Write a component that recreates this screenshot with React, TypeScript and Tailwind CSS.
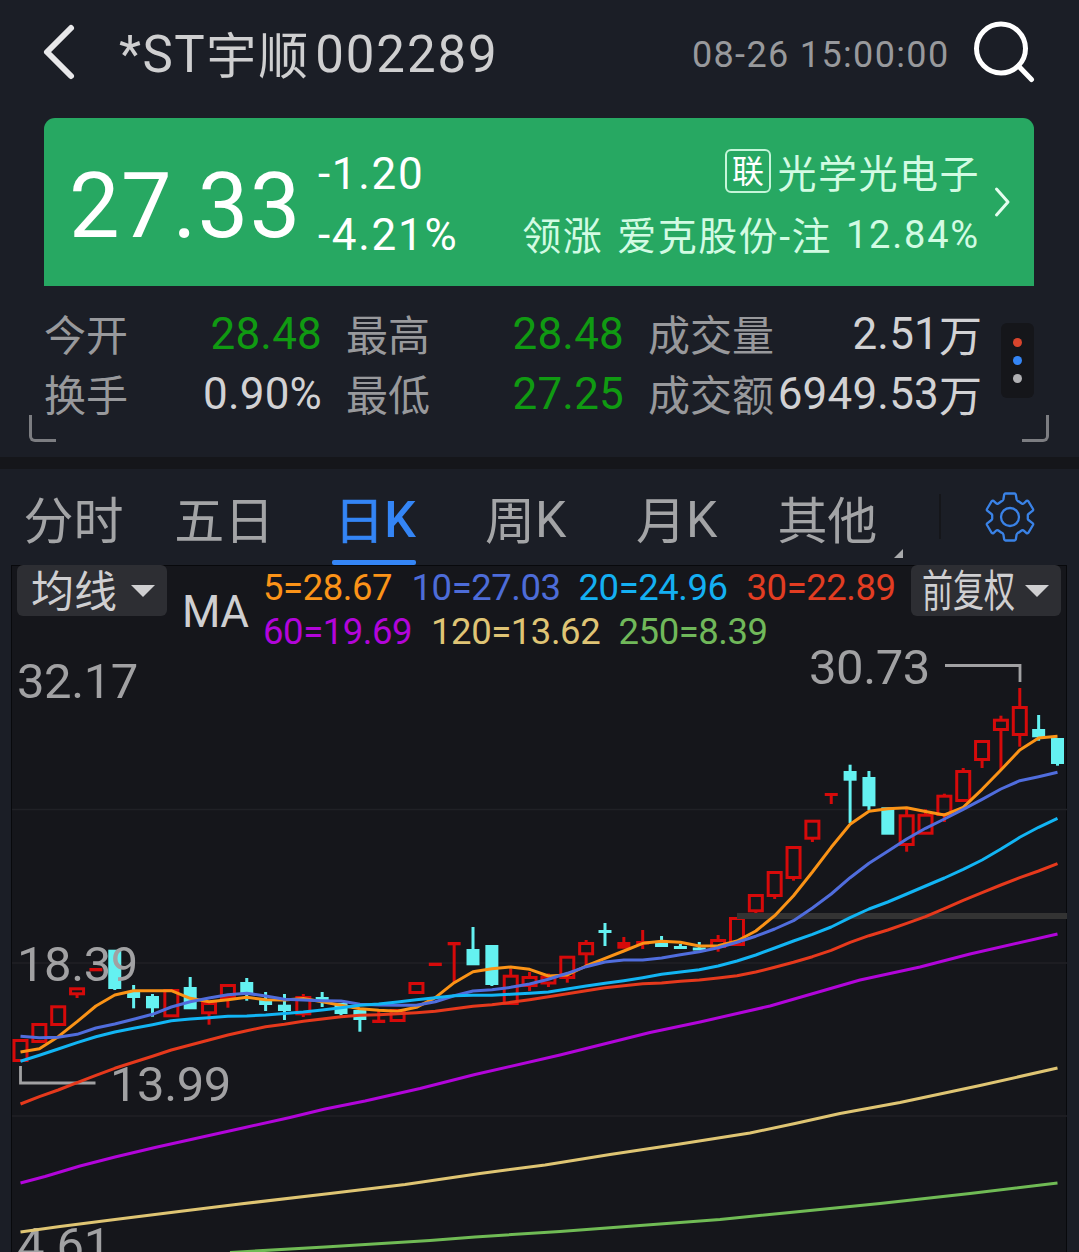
import React from "react";

type Candle = { c: "r" | "c" | "f"; o: number; b: number; h?: number; l?: number };

const STEP = 1037 / 55;
const cx = (i: number) => 20.5 + STEP * i;

/* c: colour / style, o–b: body top and bottom, h–l: wick top and bottom */
const candles: Candle[] = [
  { c: "r", o: 1039, b: 1062 },
  { c: "r", o: 1023, b: 1043 },
  { c: "r", o: 1005.3, b: 1026 },
  { c: "r", o: 987.3, b: 995.3, l: 998 },
  { c: "f", o: 968, b: 971.3 },
  { c: "c", o: 949.7, b: 989, l: 990 },
  { c: "c", o: 991, b: 998, h: 985, l: 1008.3 },
  { c: "c", o: 996, b: 1008.3, h: 994, l: 1016.7 },
  { c: "r", o: 989, b: 1017.3 },
  { c: "c", o: 987, b: 1009.3, h: 977 },
  { c: "r", o: 1002, b: 1014.3, l: 1024.7 },
  { c: "r", o: 984, b: 999, l: 1007.7 },
  { c: "c", o: 982, b: 994, h: 978, l: 1000.7 },
  { c: "c", o: 999.7, b: 1005, h: 992, l: 1011 },
  { c: "c", o: 1004.7, b: 1011, h: 994, l: 1020 },
  { c: "r", o: 996, b: 1015.3, h: 994, l: 1017 },
  { c: "c", o: 997, b: 1000, h: 992, l: 1007 },
  { c: "c", o: 1003, b: 1014, l: 1015.3 },
  { c: "c", o: 1010, b: 1020, l: 1031.7 },
  { c: "f", o: 1019.7, b: 1023, h: 1011 },
  { c: "r", o: 1009, b: 1022 },
  { c: "r", o: 982, b: 994 },
  { c: "f", o: 962.7, b: 966 },
  { c: "f", o: 942, b: 945.3, l: 982.3 },
  { c: "c", o: 949, b: 965.3, h: 927 },
  { c: "c", o: 945, b: 985, l: 986 },
  { c: "r", o: 974.7, b: 1005, h: 969 },
  { c: "r", o: 976, b: 987, h: 972, l: 991 },
  { c: "r", o: 975.5, b: 984.5, h: 973.5, l: 987 },
  { c: "r", o: 955.7, b: 979, l: 982.7 },
  { c: "r", o: 942, b: 955.3, h: 940, l: 965 },
  { c: "c", o: 930, b: 933, h: 923, l: 946 },
  { c: "f", o: 942, b: 948.7, h: 937 },
  { c: "f", o: 941, b: 944.5, h: 930, l: 949 },
  { c: "c", o: 943, b: 947, h: 936 },
  { c: "c", o: 946, b: 949, h: 944 },
  { c: "c", o: 947.5, b: 950.5, h: 942 },
  { c: "r", o: 939, b: 948, h: 935, l: 951.7 },
  { c: "r", o: 917, b: 946 },
  { c: "r", o: 894, b: 912.3, l: 913.5 },
  { c: "r", o: 871, b: 897, l: 899 },
  { c: "r", o: 846, b: 879, l: 880.7 },
  { c: "r", o: 819.7, b: 839.7, l: 842 },
  { c: "f", o: 793, b: 796, l: 804 },
  { c: "c", o: 771, b: 780.7, h: 764.7, l: 823 },
  { c: "c", o: 777, b: 806.3, h: 771, l: 810 },
  { c: "c", o: 807.3, b: 834.7 },
  { c: "r", o: 814.3, b: 846, h: 809, l: 851.7 },
  { c: "r", o: 813.7, b: 834.7, h: 809.3 },
  { c: "r", o: 794.7, b: 816, h: 793.7, l: 822 },
  { c: "r", o: 770, b: 802, h: 768 },
  { c: "r", o: 740, b: 761, l: 768 },
  { c: "r", o: 718.7, b: 731, h: 715.7, l: 770 },
  { c: "r", o: 706, b: 736, h: 688, l: 746.7 },
  { c: "c", o: 729, b: 737.3, h: 715, l: 740.7 },
  { c: "c", o: 738, b: 764, l: 765.7 },
];

const ma5 = [1052, 1048.7, 1036.7, 1021.7, 1006, 995, 990.7, 990.7, 990.7, 998.3, 1001.7, 999.7, 997.3, 999.7, 1000, 998.5, 1001.7, 1005.3, 1008.7, 1010.3, 1011.3, 1007.3, 997.7, 982.7, 971.7, 968.7, 967, 969.3, 976, 975, 966, 958.3, 951, 943.3, 941.3, 942.3, 946, 945.7, 941, 931, 915.7, 895.7, 872, 847.3, 824.3, 811.3, 808.7, 807.7, 811.5, 815, 807.3, 789.3, 770, 750, 738, 736.3];
const ma10 = [1036.3, 1037.7, 1037.3, 1034.3, 1028, 1024, 1019.3, 1014.3, 1007, 1001.7, 998, 994.7, 993.3, 996, 999.3, 1000, 1000.7, 1001, 1004.3, 1005, 1005.3, 1005.3, 1001.7, 995.7, 991, 989.7, 987.3, 984, 979.3, 973.3, 966.7, 962, 960, 960, 958, 954.7, 951.7, 947.7, 942.3, 936.2, 929, 920.7, 908, 894, 877.7, 863.3, 851.3, 839, 828.3, 819, 809.3, 799.3, 789, 780.7, 776.7, 772.3];
const ma20 = [1061.3, 1055.3, 1049, 1042.7, 1036.7, 1032, 1028.3, 1024.7, 1020.7, 1019, 1017.7, 1016.3, 1016, 1015, 1013.5, 1012, 1010, 1007.7, 1005.3, 1004, 1002, 999.7, 997.7, 995.7, 995.3, 995.3, 994.3, 993.3, 992, 989, 986, 983.3, 980.7, 977.7, 974.3, 972, 969.7, 966, 961, 955, 948, 941, 934.3, 927, 917.7, 909, 902, 894, 886, 878, 869.3, 860, 849, 837.3, 827.3, 818.3];
const ma30 = [1104, 1096.7, 1090, 1082.7, 1075.3, 1068.3, 1062.3, 1056.3, 1050, 1045, 1040, 1035, 1030.7, 1026.7, 1024.3, 1021.3, 1019, 1016.7, 1015.3, 1014.7, 1013.7, 1012.7, 1011.3, 1008.7, 1006.3, 1004.7, 1002.3, 999.7, 996.7, 993.7, 990.7, 987.7, 985.7, 983.7, 983, 981.3, 980, 978, 975.7, 972, 967.3, 962.3, 956.7, 950.3, 942.3, 935.7, 930, 923.3, 916.7, 908.7, 900.3, 892.7, 885, 877.7, 871, 863.7];

const line = (ys: number[]) => ys.map((y, i) => `${cx(i).toFixed(1)},${y}`).join(" ");

function CandleShape({ d, i }: { d: Candle; i: number }) {
  const x = cx(i);
  const color = d.c === "c" ? "#64f1f1" : "#d60a0a";
  return (
    <g fill={color}>
      {d.h !== undefined && <rect x={x - 1.5} y={d.h} width={3} height={d.o - d.h + 1} />}
      {d.l !== undefined && <rect x={x - 1.5} y={d.b - 1} width={3} height={d.l - d.b + 1} />}
      {d.c === "r" ? (
        <rect x={x - 6.5} y={d.o + 1.5} width={13} height={d.b - d.o - 3} fill="none" stroke={color} strokeWidth={3} />
      ) : (
        <rect x={x - 6.5} y={d.o} width={13} height={d.b - d.o} />
      )}
    </g>
  );
}

function Chart() {
  return (
    <svg className="absolute inset-0 h-full w-full" viewBox="0 565 1079 687" fill="none">
      <rect x="11.5" y="565.5" width="1055" height="720" fill="#15161b" stroke="#08090c" />
      <g stroke="#202126" strokeWidth="1.5">
        <path d="M12 809.5H1067M12 963H1067M12 1116H1067" />
      </g>
      {candles.map((d, i) => (d.c === "c" ? <CandleShape key={i} d={d} i={i} /> : null))}
      <g fill="#a1a1a3" fontFamily="Roboto, sans-serif" fontSize="49" letterSpacing="-0.45">
        <text x="17" y="698">32.17</text>
        <text x="809" y="684">30.73</text>
        <text x="17" y="980.5">18.39</text>
        <text x="110" y="1100.5">13.99</text>
        <text x="17" y="1262">4.61</text>
      </g>
      <path d="M945 665.5H1020V682M20.5 1066V1083H95.5" stroke="#a1a1a3" strokeWidth="2.8" />
      {candles.map((d, i) => (d.c !== "c" ? <CandleShape key={i} d={d} i={i} /> : null))}
      <rect x="737" y="913" width="330" height="6" fill="#333333" />
      <g strokeWidth="3" strokeLinejoin="round">
        <polyline points={line(ma5)} stroke="#fb9316" />
        <polyline points={line(ma10)} stroke="#506ddd" />
        <polyline points={line(ma20)} stroke="#12b5f4" />
        <polyline points={line(ma30)} stroke="#e6391c" />
        <path
          d="M20.5 1183L45 1176.5L80 1166L115 1157L155 1147.5L200 1137.5L245 1127.5L290 1117.500L325 1109L365 1101L420 1088.5L475 1074.500L560 1055L600 1045L650 1032.5L700 1022L770 1006L860 980L920 967L970 954L1057.5 934"
          stroke="#b205da"
        />
        <path
          d="M20.5 1232L60 1226.500L115 1219.5L175 1212L240 1204L330 1193.500L405 1184.500L480 1173.5L545 1165L610 1154.500L680 1144L750 1133L795 1123.500L840 1113.500L900 1102.500L980 1085.5L1057.5 1068"
          stroke="#dfc573"
        />
        <path d="M230 1252.500L325 1247L430 1240.5L475 1237L560 1231.500L640 1225.500L720 1219.500L800 1211.5L880 1203.500L970 1193.500L1057.5 1183" stroke="#70bb55" />
      </g>
    </svg>
  );
}

function Header() {
  return (
    <header className="flex h-[118px] items-start pl-[42px] pr-[43px]">
      <svg className="mt-[22px] h-[60px] w-[36px]" viewBox="0 0 36 60" fill="none">
        <path d="M29 6L5 30L29 54" stroke="#e8e8ea" strokeWidth="6" strokeLinecap="round" strokeLinejoin="round" />
      </svg>
      <h1 className="ml-[41px] mt-[25px] flex whitespace-nowrap text-[51px] leading-[60px] tracking-[1.5px] text-[#cfcfd0]">
        <span>*ST</span>
        <span className="mt-[2px] text-[50px] tracking-[2px]">宇顺</span>
        <span className="ml-[5px] tracking-[1.9px]">002289</span>
      </h1>
      <span className="ml-auto mt-[25px] whitespace-nowrap text-[36px] leading-[60px] tracking-[1.35px] text-[#98999c]">
        08-26 15:00:00
      </span>
      <svg className="ml-[22.5px] mt-[20px] h-[64px] w-[64px]" viewBox="972 20 64 64" fill="none" stroke="#fff" strokeLinecap="round">
        <circle cx="1001" cy="48.5" r="24.5" strokeWidth="5" />
        <path d="M1018.5 66L1031.5 79.5" strokeWidth="5" />
      </svg>
    </header>
  );
}

function PriceCard() {
  return (
    <section className="ml-[44px] mr-[45px] flex h-[168px] rounded-t-[11px] bg-[#27a862] pl-[25px] text-white">
      <div className="mt-[39px] w-[249px] text-[90px] leading-[100px] tracking-[1.3px]">27.33</div>
      <div className="mt-[26px] flex flex-col gap-[1px] text-[44px] leading-[60px] tracking-[1.7px]">
        <span>-1.20</span>
        <span>-4.21%</span>
      </div>
      <div className="ml-auto mt-[26px] flex flex-col items-end gap-[1px] whitespace-nowrap text-[39px] leading-[60px] tracking-[1.5px] text-[#d2fbe3]">
        <div className="flex">
          <span className="mr-[6.5px] mt-[5px] flex h-[44px] w-[46px] items-center justify-center rounded-[6px] border-2 border-[#c5f5d9] pt-[3px] text-[32px] leading-[37px] tracking-normal text-white">
            联
          </span>
          <span className="mt-px">光学光电子</span>
        </div>
        <div className="-mt-px flex gap-[14px]">
          <span className="mt-[2px]">领涨</span>
          <span className="mt-[2px]">爱克股份-注</span>
          <span className="text-[38px] tracking-[1.8px]">12.84%</span>
        </div>
      </div>
      <svg className="ml-[13px] mr-[21px] mt-[67px] h-[34px] w-[20px]" viewBox="0 0 20 34" fill="none">
        <path d="M3.500 4L15 17L3.500 30" stroke="#e4fdef" strokeWidth="3" strokeLinecap="round" strokeLinejoin="round" />
      </svg>
    </section>
  );
}

type StatProps = { label: string; value: string; unit?: string; tone: string; className: string };

function Stat({ label, value, unit, tone, className }: StatProps) {
  return (
    <div className={"flex h-[60px] justify-between whitespace-nowrap leading-[60px] " + className}>
      <span className="mt-[3px] text-[42px] text-[#98999c]">{label}</span>
      <span className={"flex text-[44px] " + tone}>
        <span className="tracking-[0.2px]">{value}</span>
        {unit && <span className="-mr-px mt-[3px] text-[43px]">{unit}</span>}
      </span>
    </div>
  );
}

function Stats() {
  const green = "text-[#109a12]";
  const plain = "text-[#d2d2d4]";
  return (
    <section className="relative flex h-[171px] pl-[44px] pt-[18px]">
      <div className="flex w-[937px] flex-col">
        <div className="flex">
          <Stat label="今开" value="28.48" tone={green} className="w-[278px]" />
          <Stat label="最高" value="28.48" tone={green} className="ml-[24px] w-[278px]" />
          <Stat label="成交量" value="2.51" unit="万" tone={plain} className="ml-[24px] w-[333px]" />
        </div>
        <div className="flex">
          <Stat label="换手" value="0.90%" tone={plain} className="w-[278px]" />
          <Stat label="最低" value="27.25" tone={green} className="ml-[24px] w-[278px]" />
          <Stat label="成交额" value="6949.53" unit="万" tone={plain} className="ml-[24px] w-[333px]" />
        </div>
      </div>
      <div className="ml-[20px] mt-[19px] flex h-[75px] w-[33px] flex-col items-center justify-center gap-[9px] rounded-[6px] bg-[#15161a]">
        <i className="h-[9px] w-[9px] rounded-full bg-[#d8452d]" />
        <i className="h-[9px] w-[9px] rounded-full bg-[#3485f5]" />
        <i className="h-[9px] w-[9px] rounded-full bg-[#b0b0b3]" />
      </div>
      <span className="absolute bottom-[15px] left-[29px] h-[27px] w-[27px] rounded-bl-[6px] border-b-[3px] border-l-[3px] border-[#7c7d81]" />
      <span className="absolute bottom-[15px] right-[30px] h-[27px] w-[27px] rounded-br-[6px] border-b-[3px] border-r-[3px] border-[#7c7d81]" />
    </section>
  );
}

const tabs = [
  { zh: "分时", k: "" },
  { zh: "五日", k: "" },
  { zh: "日", k: "K" },
  { zh: "周", k: "K" },
  { zh: "月", k: "K" },
  { zh: "其他", k: "" },
];

function Tabs() {
  return (
    <nav className="flex h-[96px]">
      <div className="-ml-[2px] flex">
        {tabs.map(({ zh, k }) => {
          const active = zh === "日";
          return (
            <div
              key={zh}
              className={
                "relative flex w-[150.8px] justify-center text-[50px] leading-[100px] " +
                (active ? "text-[#3485f5]" : "text-[#a3a4a6]")
              }
            >
              <span className={"mt-[3px] h-[90px] " + (active ? "[-webkit-text-stroke:0.6px_#3485f5]" : "")}>{zh}</span>
              {k && <span className={"mt-px h-[90px] " + (active ? "font-medium" : "")}>{k}</span>}
              {active && <span className="absolute bottom-0 left-[32px] h-[5px] w-[84px] rounded-[2px] bg-[#3485f5]" />}
              {zh === "其他" && (
                <svg className="absolute bottom-[7px] right-0 h-[9px] w-[9px]" viewBox="0 0 9 9">
                  <path d="M9 0V9H0Z" fill="#a9aaac" />
                </svg>
              )}
            </div>
          );
        })}
      </div>
      <div className="ml-[36px] mt-[25px] h-[45px] w-[2px] bg-[#15161a]" />
      <svg className="ml-[43px] mt-[22px] h-[52px] w-[52px]" viewBox="-26 -26 52 52" fill="none" stroke="#3a82e6" strokeWidth="2.3" strokeLinejoin="round">
        <path d="M-4.500 -23.500H4.500Q5.500 -23.500 5.800 -22.500L6.600 -17.500Q7 -16.200 8.500 -15.700L12 -13.200Q13 -12.800 14 -13.800L16.500 -16.200Q17.500 -16.800 18.300 -15.800L23 -8Q23.500 -7 22.800 -6.300L18.500 -3Q17.600 -2.300 17.800 -1.200V1.200Q17.600 2.300 18.500 3L22.800 6.300Q23.500 7 23 8L18.300 15.800Q17.500 16.800 16.500 16.200L14 13.800Q13 12.800 12 13.200L8.500 15.700Q7 16.200 6.600 17.500L5.800 22.500Q5.500 23.500 4.500 23.500H-4.500Q-5.500 23.500 -5.800 22.500L-6.600 17.500Q-7 16.200 -8.500 15.700L-12 13.200Q-13 12.800 -14 13.800L-16.500 16.200Q-17.500 16.800 -18.300 15.800L-23 8Q-23.500 7 -22.800 6.300L-18.500 3Q-17.600 2.300 -17.800 1.200V-1.200Q-17.600 -2.300 -18.500 -3L-22.800 -6.300Q-23.500 -7 -23 -8L-18.300 -15.800Q-17.500 -16.800 -16.500 -16.200L-14 -13.800Q-13 -12.800 -12 -13.200L-8.500 -15.700Q-7 -16.200 -6.600 -17.500L-5.800 -22.500Q-5.500 -23.500 -4.500 -23.500Z" />
        <circle r="9" />
      </svg>
    </nav>
  );
}

function Caret() {
  return (
    <svg className="h-[12px] w-[24px]" viewBox="0 0 24 12">
      <path d="M0 0H24L12 12Z" fill="#cfcfd1" />
    </svg>
  );
}

function Legend() {
  return (
    <div className="relative flex whitespace-nowrap">
      <div className="ml-[17px] flex h-[51px] w-[150px] items-center rounded-[6px] bg-[#2d2e33] pl-[14px] text-[43px] leading-[51px] text-[#cfcfd1]">
        <span className="mr-[14px] pt-[4px]">均线</span>
        <Caret />
      </div>
      <span className="ml-[15px] mt-[17px] w-[81px] text-[44px] leading-[60px] tracking-[-0.5px] text-[#cfcfd1]">MA</span>
      <div className="w-[648px] pt-px text-[36.500px] leading-[43.500px] tracking-[-0.45px]">
        <div className="flex">
          <span className="w-[148.500px] text-[#fb9318]">5=28.67</span>
          <span className="w-[167px] text-[#4d6cd8]">10=27.03</span>
          <span className="w-[168px] text-[#14b0f2]">20=24.96</span>
          <span className="text-[#e23d22]">30=22.89</span>
        </div>
        <div className="flex">
          <span className="w-[168px] text-[#b205da]">60=19.69</span>
          <span className="w-[187.500px] text-[#dfc475]">120=13.62</span>
          <span className="text-[#70b85a]">250=8.39</span>
        </div>
      </div>
      <div className="flex h-[51px] w-[150px] items-center rounded-[6px] bg-[#2d2e33] pl-[11px] text-[44px] leading-[51px] text-[#cfcfd1]">
        <span className="mr-[10px] w-[93px] pt-[4px]">
          <span className="inline-block origin-left scale-x-[0.705]">前复权</span>
        </span>
        <Caret />
      </div>
    </div>
  );
}

export default function App() {
  return (
    <main className="h-[1252px] w-[1079px] overflow-hidden bg-[#1b1e26] font-['Roboto','Noto_Sans_CJK_SC',sans-serif]">
      <Header />
      <PriceCard />
      <Stats />
      <div className="h-[12px] bg-[#15161a]" />
      <Tabs />
      <section className="relative h-[687px] overflow-hidden">
        <Chart />
        <Legend />
      </section>
    </main>
  );
}
